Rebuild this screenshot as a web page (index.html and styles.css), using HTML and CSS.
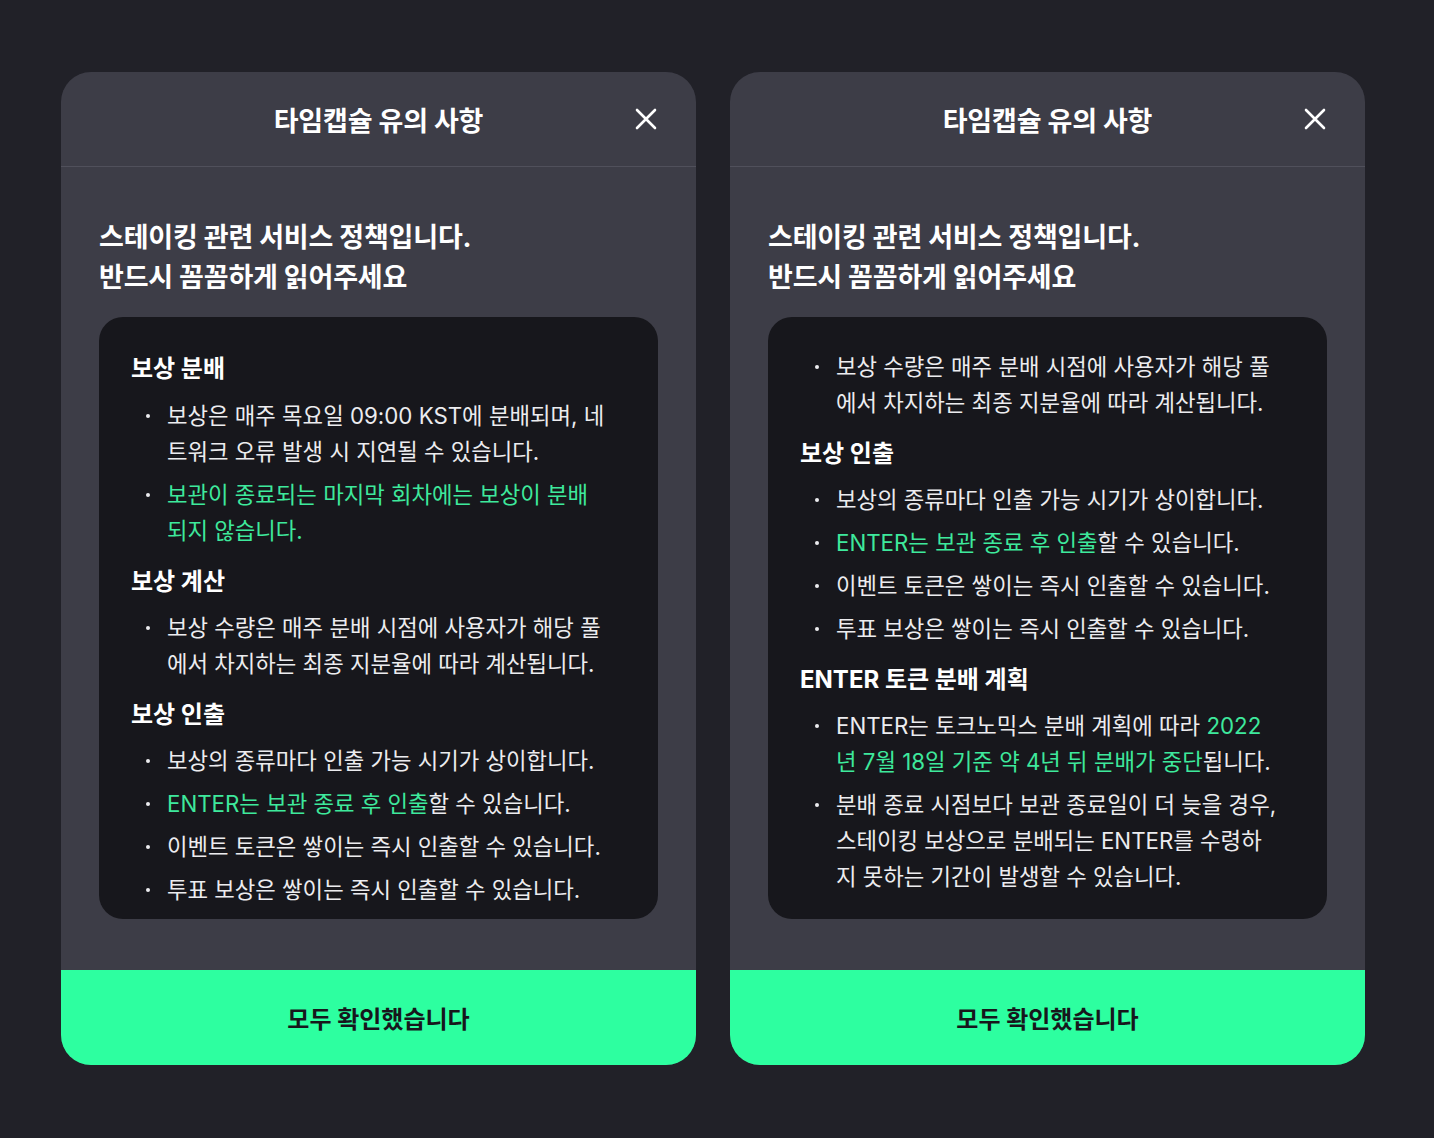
FILE: index.html
```html
<!DOCTYPE html>
<html lang="ko">
<head>
    <meta charset="UTF-8">
    <title>타임캡슐 유의 사항</title>
    <link rel="stylesheet" href="styles.css">
</head>
<body>
    <div class="page">
        <section class="modal">
            <header class="modal-header">
                <h2 class="modal-title">타임캡슐 유의 사항</h2>
                <button class="close-btn" aria-label="닫기">
                    <svg width="22" height="22" viewBox="0 0 22 22"><path d="M2 2L20 20M20 2L2 20" stroke="#fff" stroke-width="2.6" stroke-linecap="round"/></svg>
                </button>
            </header>
            <div class="modal-body">
                <p class="lead">스테이킹 관련 서비스 정책입니다.<br>반드시 꼼꼼하게 읽어주세요</p>
                <div class="notice">
                    <h3>보상 분배</h3>
                    <ul>
                        <li>보상은 매주 목요일 09:00 KST에 분배되며, 네트워크 오류 발생 시 지연될 수 있습니다.</li>
                        <li><span class="hl">보관이 종료되는 마지막 회차에는 보상이 분배되지 않습니다.</span></li>
                    </ul>
                    <h3>보상 계산</h3>
                    <ul>
                        <li>보상 수량은 매주 분배 시점에 사용자가 해당 풀에서 차지하는 최종 지분율에 따라 계산됩니다.</li>
                    </ul>
                    <h3>보상 인출</h3>
                    <ul>
                        <li>보상의 종류마다 인출 가능 시기가 상이합니다.</li>
                        <li><span class="hl">ENTER는 보관 종료 후 인출</span>할 수 있습니다.</li>
                        <li>이벤트 토큰은 쌓이는 즉시 인출할 수 있습니다.</li>
                        <li>투표 보상은 쌓이는 즉시 인출할 수 있습니다.</li>
                    </ul>
                </div>
            </div>
            <button class="confirm-btn">모두 확인했습니다</button>
        </section>

        <!-- same modal, list scrolled to the end -->
        <section class="modal">
            <header class="modal-header">
                <h2 class="modal-title">타임캡슐 유의 사항</h2>
                <button class="close-btn" aria-label="닫기">
                    <svg width="22" height="22" viewBox="0 0 22 22"><path d="M2 2L20 20M20 2L2 20" stroke="#fff" stroke-width="2.6" stroke-linecap="round"/></svg>
                </button>
            </header>
            <div class="modal-body">
                <p class="lead">스테이킹 관련 서비스 정책입니다.<br>반드시 꼼꼼하게 읽어주세요</p>
                <div class="notice notice-end">
                    <ul>
                        <li>보상 수량은 매주 분배 시점에 사용자가 해당 풀에서 차지하는 최종 지분율에 따라 계산됩니다.</li>
                    </ul>
                    <h3>보상 인출</h3>
                    <ul>
                        <li>보상의 종류마다 인출 가능 시기가 상이합니다.</li>
                        <li><span class="hl">ENTER는 보관 종료 후 인출</span>할 수 있습니다.</li>
                        <li>이벤트 토큰은 쌓이는 즉시 인출할 수 있습니다.</li>
                        <li>투표 보상은 쌓이는 즉시 인출할 수 있습니다.</li>
                    </ul>
                    <h3>ENTER 토큰 분배 계획</h3>
                    <ul>
                        <li>ENTER는 토크노믹스 분배 계획에 따라 <span class="hl">2022년 7월 18일 기준 약 4년 뒤 분배가 중단</span>됩니다.</li>
                        <li>분배 종료 시점보다 보관 종료일이 더 늦을 경우, 스테이킹 보상으로 분배되는 ENTER를 수령하지 못하는 기간이 발생할 수 있습니다.</li>
                    </ul>
                </div>
            </div>
            <button class="confirm-btn">모두 확인했습니다</button>
        </section>
    </div>
</body>
</html>
```

FILE: styles.css
```css
body {
    margin: 0;
    background-color: #212128;
    font-family: Inter, 'Noto Sans CJK KR', sans-serif;
    color: #fff;
}

.page {
    display: flex;
    gap: 34px;
    padding: 72px 0 0 61px;
}

.modal {
    width: 635px;
    height: 993px;
    background-color: #3d3d47;
    border-radius: 30px;
    overflow: hidden;
    display: flex;
    flex-direction: column;
}

.modal-header {
    height: 94px;
    border-bottom: 1px solid #50505b;
    display: grid;
    grid-template-columns: 1fr auto 1fr;
    align-items: center;
    padding: 0 39px;
}

.modal-title {
    grid-column: 2;
    margin: 0;
    font-size: 27px;
    font-weight: 700;
    letter-spacing: -0.2px;
}

.close-btn {
    grid-column: 3;
    justify-self: end;
    background: none;
    border: none;
    padding: 0;
    display: flex;
    cursor: pointer;
}

.modal-body {
    flex: 1;
    padding: 51px 38px 51px;
}

.lead {
    margin: 0 0 19px;
    font-size: 27px;
    line-height: 40px;
    font-weight: 700;
    letter-spacing: -0.2px;
}

.notice {
    height: 602px;
    box-sizing: border-box;
    background-color: #17171c;
    border-radius: 24px;
    padding: 36px 50px 36px 32px;
    overflow: hidden;
    word-break: break-all;
}

.notice-end {
    padding-top: 32px;
}

.notice h3 {
    margin: 17px 0 12px;
    font-size: 24px;
    line-height: 32px;
    font-weight: 700;
}

.notice h3:first-child {
    margin-top: 0;
    margin-bottom: 13px;
}

.notice ul {
    list-style: none;
    margin: 0;
    padding: 0;
}

.notice li {
    position: relative;
    padding-left: 36px;
    font-size: 22.3px;
    line-height: 36px;
    color: #ececef;
}

.notice li + li {
    margin-top: 7px;
}

.notice li::before {
    content: '';
    position: absolute;
    left: 15px;
    top: 16px;
    width: 4px;
    height: 4px;
    border-radius: 50%;
    background-color: #ececef;
}

.hl {
    color: #3ee99c;
}

.confirm-btn {
    height: 95px;
    border: none;
    background-color: #2dffa0;
    color: #17171c;
    font-family: inherit;
    font-size: 24px;
    font-weight: 700;
    cursor: pointer;
}
```
